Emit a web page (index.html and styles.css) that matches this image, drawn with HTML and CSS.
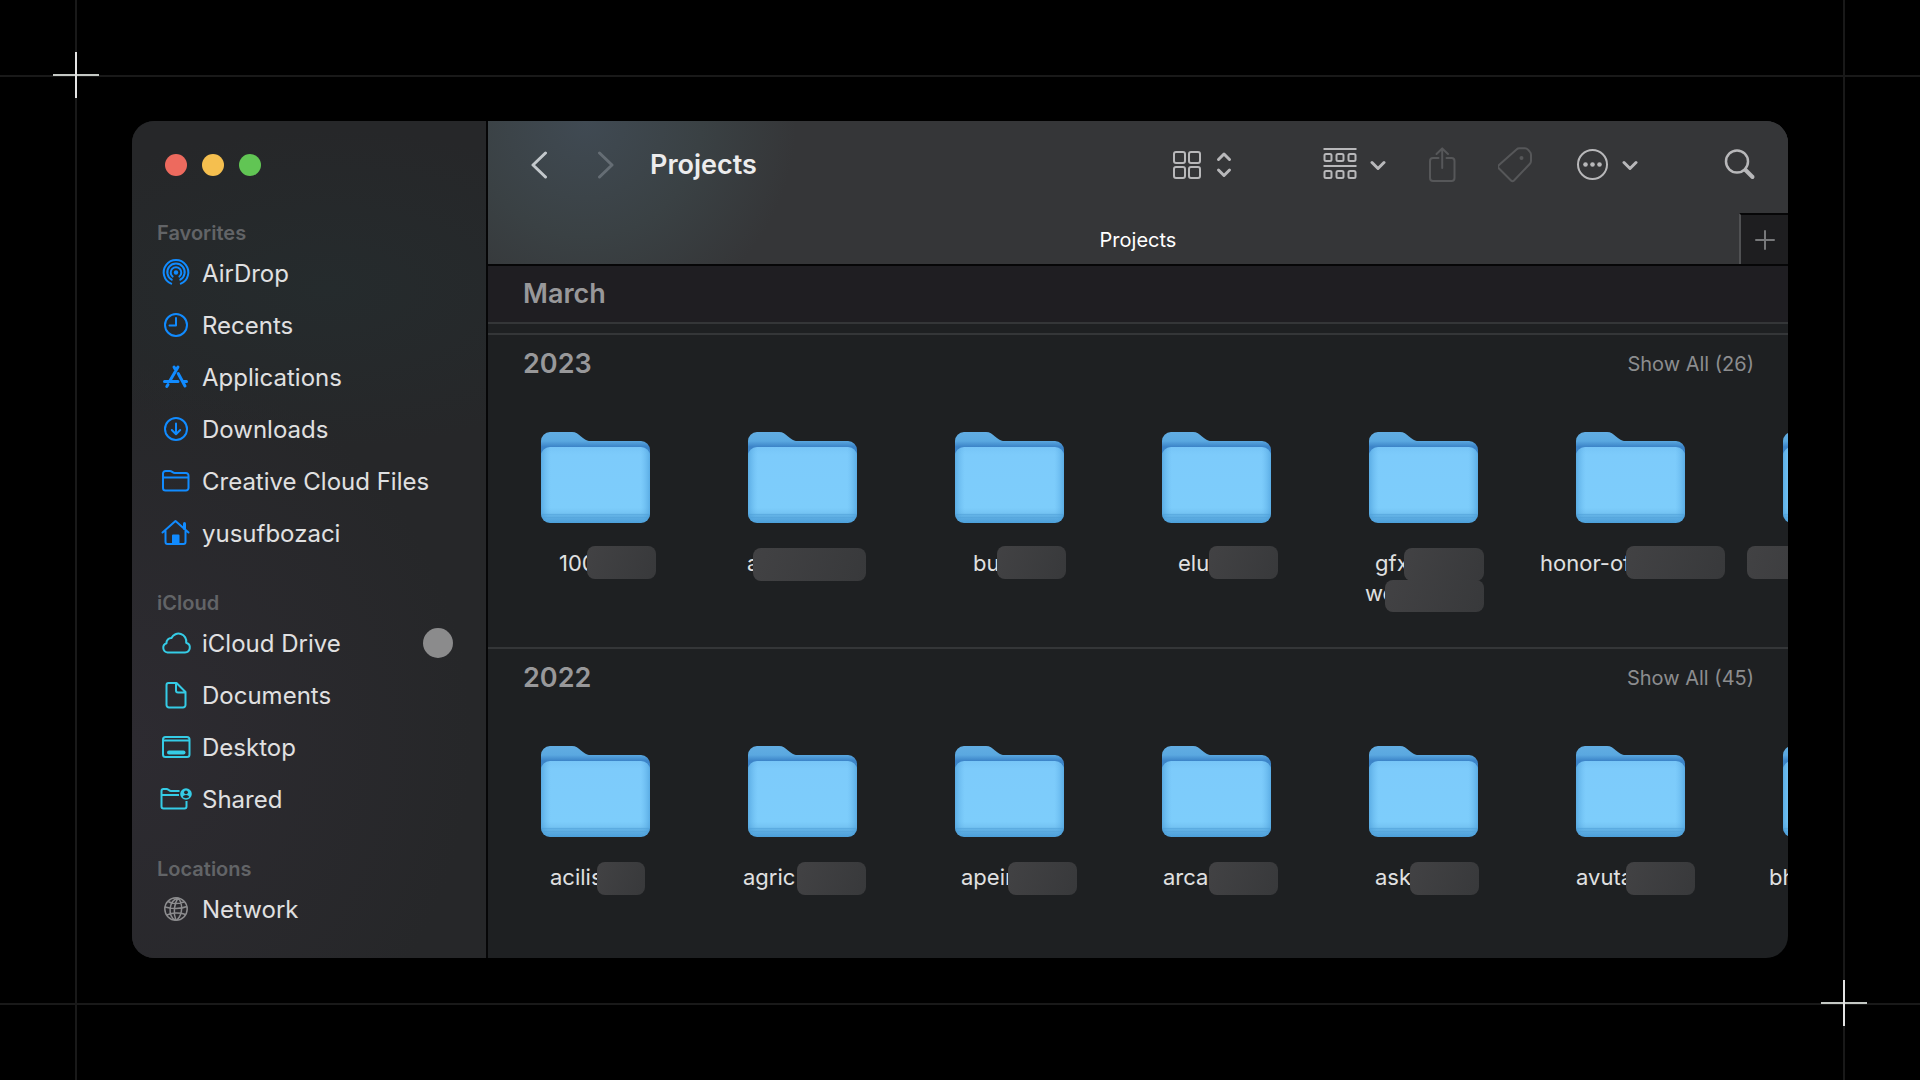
FILE: index.html
```html
<!DOCTYPE html>
<html lang="en">
<head>
<meta charset="utf-8">
<meta name="viewport" content="width=device-width, initial-scale=1">
<title>Projects</title>
<link rel="stylesheet" href="styles.css">
</head>
<body>
<svg class="defs" width="0" height="0" aria-hidden="true">
  <defs>
    <linearGradient id="back" x1="0" y1="0" x2="0" y2="1"><stop offset="0" stop-color="#62ade2"/><stop offset=".11" stop-color="#5aa8e0"/><stop offset=".18" stop-color="#3c84c8"/><stop offset="1" stop-color="#3f8fce"/></linearGradient>
    <linearGradient id="front" x1="0" y1="0" x2="0" y2="1"><stop offset="0" stop-color="#77c5f7"/><stop offset=".1" stop-color="#7dcbfb"/><stop offset=".8" stop-color="#7dcdfb"/><stop offset=".87" stop-color="#74c3f3"/><stop offset=".89" stop-color="#65b5e8"/><stop offset=".94" stop-color="#5aaae0"/><stop offset="1" stop-color="#4b9fda"/></linearGradient>
    <linearGradient id="edge" x1="0" y1="0" x2="1" y2="0"><stop offset="0" stop-color="#3f93d2" stop-opacity=".55"/><stop offset=".09" stop-color="#5fb0e8" stop-opacity="0"/><stop offset=".91" stop-color="#5fb0e8" stop-opacity="0"/><stop offset="1" stop-color="#3f93d2" stop-opacity=".55"/></linearGradient>
    <symbol id="folder" viewBox="0 0 109 91">
      <path fill="url(#back)" d="M0 9a9 9 0 0 1 9-9h22c4 0 6 2 9 4.500l3 2.200C45 8.300 47 9 50 9h50a9 9 0 0 1 9 9v64H0z"/>
      <rect y="15" width="109" height="76" rx="9" fill="url(#front)"/>
      <rect y="15" width="109" height="76" rx="9" fill="url(#edge)"/>
      <path d="M1 82.500h107M1 85.500h107" stroke="#4f9fd8" stroke-opacity=".45"/>
    </symbol>
    <symbol id="down" viewBox="0 0 16 36"><path d="M2 15.500l6 6 6-6" fill="none" stroke="currentColor" stroke-width="3" stroke-linecap="round" stroke-linejoin="round"/></symbol>
  </defs>
</svg>

<div class="guides" aria-hidden="true">
  <i class="guide guide-top"></i><i class="guide guide-bottom"></i><i class="guide guide-left"></i><i class="guide guide-right"></i>
  <i class="cross cross-start"></i><i class="cross cross-end"></i>
</div>

<div class="window">
  <aside class="sidebar">
    <div class="lights">
      <button class="light red" aria-label="Close"></button>
      <button class="light yellow" aria-label="Minimize"></button>
      <button class="light green" aria-label="Zoom"></button>
    </div>
    <nav class="places">
      <section class="group">
        <h2>Favorites</h2>
        <a class="place blue" href="#"><svg viewBox="0 0 32 32"><g fill="none" stroke="currentColor" stroke-width="2" stroke-linecap="round"><path d="M11.200 26.700a12.300 12.300 0 1 1 9.600 0"/><path d="M11.700 22.700a8.700 8.700 0 1 1 8.600 0"/><path d="M12.600 19.600a5.300 5.300 0 1 1 6.800 0"/></g><circle cx="16" cy="15.500" r="2.200" fill="currentColor"/></svg>AirDrop</a>
        <a class="place blue" href="#"><svg viewBox="0 0 32 32" fill="none" stroke="currentColor" stroke-width="2" stroke-linecap="round" stroke-linejoin="round"><circle cx="16" cy="16" r="11"/><path d="M16 9v7.500h-6.500"/></svg>Recents</a>
        <a class="place blue" href="#"><svg viewBox="0 0 32 32" fill="none" stroke="currentColor" stroke-width="3" stroke-linecap="round"><path d="M18 6l-8.500 14.500M14 6l2 3.500M18.200 12.500L25 25M4.500 20.500h13.500M23.500 20.500h3M8 23.500l-1.200 2"/></svg>Applications</a>
        <a class="place blue" href="#"><svg viewBox="0 0 32 32" fill="none" stroke="currentColor" stroke-width="2" stroke-linecap="round" stroke-linejoin="round"><circle cx="16" cy="16" r="11"/><path d="M16 10.500v10.500M11.800 17l4.200 4.200 4.200-4.200"/></svg>Downloads</a>
        <a class="place blue" href="#"><svg viewBox="0 0 32 32" fill="none" stroke="currentColor" stroke-width="2" stroke-linejoin="round"><path d="M3 23V8.500A2.500 2.500 0 0 1 5.500 6H10c2 0 2.500 2 5 2h11a2.500 2.500 0 0 1 2.500 2.500V23a2.500 2.500 0 0 1-2.500 2.500H5.500A2.500 2.500 0 0 1 3 23zM3 12.500h25.500"/></svg>Creative Cloud Files</a>
        <a class="place blue" href="#"><svg viewBox="0 0 32 32" fill="none" stroke="currentColor" stroke-width="2" stroke-linecap="round" stroke-linejoin="round"><path d="M2.500 15.500L15.500 4l13 11.500M5.500 14v11a2 2 0 0 0 2 2h16a2 2 0 0 0 2-2V14"/><path d="M24.500 6.500v5" stroke-width="3"/><path d="M13 18.500h5.500V27H13z" fill="currentColor"/></svg>yusufbozaci</a>
      </section>
      <section class="group">
        <h2>iCloud</h2>
        <a class="place cyan" href="#"><svg viewBox="0 0 32 32" fill="none" stroke="currentColor" stroke-width="2" stroke-linejoin="round"><path d="M7.500 25.500H25a5 5 0 0 0 1.200-9.800A7.800 7.800 0 0 0 11.500 11a4.800 4.800 0 0 0-5 5.200 4.800 4.800 0 0 0 1 9.300z"/></svg>iCloud Drive<span class="progress" role="img" aria-label="Syncing"></span></a>
        <a class="place cyan" href="#"><svg viewBox="0 0 32 32" fill="none" stroke="currentColor" stroke-width="2" stroke-linejoin="round"><path d="M8.500 4h8L25.500 13v13a2.500 2.500 0 0 1-2.500 2.500H9A2.500 2.500 0 0 1 6.500 26V6a2 2 0 0 1 2-2zM16 4v7.500a2 2 0 0 0 2 2h7.500"/></svg>Documents</a>
        <a class="place cyan" href="#"><svg viewBox="0 0 32 32" fill="none" stroke="currentColor" stroke-width="2"><rect x="3" y="6" width="26.500" height="20" rx="2.500"/><path d="M3 9.500h26.500"/><path d="M9 21.500h14.500" stroke-width="4" stroke-linecap="round"/></svg>Desktop</a>
        <a class="place cyan" href="#"><svg viewBox="0 0 32 32" fill="none" stroke="currentColor" stroke-width="2" stroke-linejoin="round"><path d="M19.500 8H11C9 8 8.500 6 6.500 6h-3A2 2 0 0 0 1.500 8v15.500a2 2 0 0 0 2 2h21a2 2 0 0 0 2-2v-5.500M1.500 12h17.500"/><circle cx="26" cy="11" r="5.800" fill="currentColor" stroke="none"/><g fill="#29282b" stroke="none"><circle cx="26" cy="9.300" r="1.900"/><path d="M22.800 14c.4-2.800 6-2.800 6.400 0-1.500 1.500-5 1.500-6.400 0z"/></g></svg>Shared</a>
      </section>
      <section class="group">
        <h2>Locations</h2>
        <a class="place grey" href="#"><svg viewBox="0 0 32 32" fill="none" stroke="currentColor" stroke-width="1.500"><circle cx="16" cy="16" r="11.200"/><path d="M18 5c-10 3-10 18-3 22M18 5c5 5 5 16-1 22M18 5c-4 6-5 15-2 22M5 14c6 2 16 2 22-.5M8 8.500c4 2.500 11 2.500 16 .5M7 22c5-2.500 13-2.500 18.500-.5"/></svg>Network</a>
      </section>
    </nav>
  </aside>

  <main class="content">
    <header class="chrome">
      <div class="toolbar">
        <button class="nav-btn" aria-label="Back"><svg viewBox="0 0 18 28"><path d="M15.500 2L3 14l12.500 12"/></svg></button>
        <button class="nav-btn dim" aria-label="Forward"><svg viewBox="0 0 18 28"><path d="M2.500 2L15 14 2.500 26"/></svg></button>
        <h1>Projects</h1>
        <button class="tool view" aria-label="View"><svg class="ico" viewBox="0 0 36 36" fill="none" stroke="currentColor" stroke-width="2"><rect x="6" y="5" width="11" height="11" rx="2"/><rect x="21" y="5" width="11" height="11" rx="2"/><rect x="6" y="20" width="11" height="11" rx="2"/><rect x="21" y="20" width="11" height="11" rx="2"/></svg><svg class="chev" viewBox="0 0 16 36"><path d="M2.500 12.500L8 7l5.500 5.500M2.500 23L8 28.500l5.500-5.500" fill="none" stroke="currentColor" stroke-width="3" stroke-linecap="round" stroke-linejoin="round"/></svg></button>
        <button class="tool" aria-label="Group"><svg class="ico" viewBox="0 0 36 36" fill="none" stroke="currentColor" stroke-width="2"><path d="M1.500 2h33M1.500 19h33"/><rect x="2.500" y="7" width="7" height="7" rx="1.500"/><rect x="14.500" y="7" width="7" height="7" rx="1.500"/><rect x="26.500" y="7" width="7" height="7" rx="1.500"/><rect x="2.500" y="24" width="7" height="7" rx="1.500"/><rect x="14.500" y="24" width="7" height="7" rx="1.500"/><rect x="26.500" y="24" width="7" height="7" rx="1.500"/></svg><svg class="chev"><use href="#down"/></svg></button>
        <div class="pair">
          <button class="tool dim" aria-label="Share"><svg class="ico" viewBox="0 0 36 36" fill="none" stroke="currentColor" stroke-width="2" stroke-linecap="round" stroke-linejoin="round"><path d="M12.500 11H7a3 3 0 0 0-3 3v17a3 3 0 0 0 3 3h18.500a3 3 0 0 0 3-3V14a3 3 0 0 0-3-3H20.500M16.200 21V1.500M10.500 7l5.700-5.500L22 7"/></svg></button>
          <button class="tool dim" aria-label="Tags"><svg class="ico" viewBox="0 0 36 36" fill="none" stroke="currentColor" stroke-width="2" stroke-linejoin="round"><path d="M18.500 2.500C19.500 1.500 20 1.300 21.500 1.300H27c1.500 0 2 .3 3 1.300l1.700 2C32.700 5.600 33 6.300 33 7.700V14c0 1.500-.3 2-1.300 3L16 33.500c-1 1-2 1-3 0L1 21.500c-1.200-1.200-1.200-2.400 0-3.500z"/><circle cx="23.500" cy="11" r="2" fill="currentColor" stroke="none"/></svg></button>
        </div>
        <button class="tool" aria-label="More"><svg class="ico" viewBox="0 0 36 36"><circle cx="18.500" cy="17.500" r="14.500" fill="none" stroke="currentColor" stroke-width="2"/><g fill="currentColor"><circle cx="11.500" cy="17.500" r="2.300"/><circle cx="18.500" cy="17.500" r="2.300"/><circle cx="25.500" cy="17.500" r="2.300"/></g></svg><svg class="chev"><use href="#down"/></svg></button>
        <button class="tool search" aria-label="Search"><svg class="ico" viewBox="0 0 36 36" fill="none" stroke="currentColor" stroke-linecap="round"><circle cx="15" cy="14.500" r="11" stroke-width="2.500"/><path d="M23.500 23l7 7" stroke-width="4"/></svg></button>
      </div>
      <div class="tabs">
        <button class="tab">Projects</button>
        <button class="new-tab" aria-label="New tab"><svg viewBox="0 0 20 20"><path d="M10 1v18M1 10h18" fill="none" stroke="currentColor" stroke-width="2" stroke-linecap="round"/></svg></button>
      </div>
    </header>

    <section class="month"><h2>March</h2></section>

    <section class="year">
      <header class="year-head"><h2>2023</h2><a href="#">Show All (26)</a></header>
      <ul class="folders">
        <li><svg class="folder"><use href="#folder"/></svg><span class="name" style="--indent:67px">100<i class="mask" style="--x:95px;--w:69px"></i></span></li>
        <li><svg class="folder"><use href="#folder"/></svg><span class="name" style="--indent:48px">a<i class="mask low" style="--x:54px;--w:113px"></i></span></li>
        <li><svg class="folder"><use href="#folder"/></svg><span class="name" style="--indent:67px">bu<i class="mask" style="--x:91px;--w:69px"></i></span></li>
        <li><svg class="folder"><use href="#folder"/></svg><span class="name" style="--indent:65px">elu<i class="mask" style="--x:96px;--w:69px"></i></span></li>
        <li><svg class="folder"><use href="#folder"/></svg><span class="name" style="--indent:55px">gfx<i class="mask low" style="--x:84px;--w:80px"></i></span><span class="name" style="--indent:45px">we<i class="mask wrapped" style="--x:65px;--w:99px"></i></span></li>
        <li><svg class="folder"><use href="#folder"/></svg><span class="name" style="--indent:13px">honor-of<i class="mask" style="--x:99px;--w:99px"></i></span></li>
        <li><svg class="folder"><use href="#folder"/></svg><span class="name"><i class="mask" style="--x:13px;--w:99px"></i></span></li>
      </ul>
    </section>

    <section class="year">
      <header class="year-head"><h2>2022</h2><a href="#">Show All (45)</a></header>
      <ul class="folders">
        <li><svg class="folder"><use href="#folder"/></svg><span class="name" style="--indent:58px">acilis<i class="mask low" style="--x:105px;--w:48px"></i></span></li>
        <li><svg class="folder"><use href="#folder"/></svg><span class="name" style="--indent:44px">agric<i class="mask low" style="--x:98px;--w:69px"></i></span></li>
        <li><svg class="folder"><use href="#folder"/></svg><span class="name" style="--indent:55px">apein<i class="mask low" style="--x:102px;--w:69px"></i></span></li>
        <li><svg class="folder"><use href="#folder"/></svg><span class="name" style="--indent:50px">arca<i class="mask low" style="--x:96px;--w:69px"></i></span></li>
        <li><svg class="folder"><use href="#folder"/></svg><span class="name" style="--indent:55px">ask<i class="mask low" style="--x:90px;--w:69px"></i></span></li>
        <li><svg class="folder"><use href="#folder"/></svg><span class="name" style="--indent:49px">avuta<i class="mask low" style="--x:99px;--w:69px"></i></span></li>
        <li><svg class="folder"><use href="#folder"/></svg><span class="name" style="--indent:35px">bh</span></li>
      </ul>
    </section>
  </main>
</div>
</body>
</html>
```
FILE: styles.css
```css
* { box-sizing: border-box; }

body {
  margin: 0;
  min-height: 100vh;
  padding: 121px 132px 122px;
  display: flex;
  position: relative;
  background: #000;
  color: #e0e0e1;
  font-family: Inter, "Liberation Sans", sans-serif;
  font-size: 22px;
}

h1, h2, ul { margin: 0; padding: 0; }
ul { list-style: none; }
a { color: inherit; text-decoration: none; }
button { margin: 0; padding: 0; border: 0; background: none; color: inherit; font: inherit; }
svg { display: block; flex: none; }
.defs { position: absolute; }

/* Guide lines and corner marks behind the window */
.guides { position: absolute; inset: 0; overflow: hidden; }
.guide { position: absolute; background: #191919; }
.guide-top, .guide-bottom { left: 0; right: 0; height: 2px; }
.guide-left, .guide-right { top: 0; bottom: 0; width: 2px; }
.guide-top { top: 75px; }
.guide-bottom { bottom: 75px; }
.guide-left { left: 75px; }
.guide-right { right: 75px; }
.cross {
  position: absolute;
  width: 46px;
  height: 46px;
  background:
    linear-gradient(#e4e4e4, #e4e4e4) center / 2px 100% no-repeat,
    linear-gradient(#c4c8c4, #c4c8c4) center / 100% 2px no-repeat;
}
.cross-start { left: 53px; top: 52px; }
.cross-end { right: 53px; bottom: 54px; }

.window {
  position: relative;
  flex: 1;
  min-width: 0;
  display: flex;
  overflow: hidden;
  border-radius: 22px;
  background: #1e2022;
}

/* Sidebar */
.sidebar {
  flex: none;
  width: 356px;
  border-right: 2px solid #060607;
  padding: 33px 25px 20px;
  background:
    radial-gradient(ellipse 320px 160px at 55% 20%, #252b2d, transparent),
    radial-gradient(ellipse 340px 380px at 0 74%, #2d2b31, transparent),
    #262729;
}
.lights { display: flex; gap: 15px; padding-left: 8px; }
.light { width: 22px; height: 22px; border-radius: 50%; }
.red { background: #ed6a5e; }
.yellow { background: #f5bf4f; }
.green { background: #61c554; }
.places { display: flex; flex-direction: column; gap: 27px; padding-top: 40px; }
.group h2 { height: 31px; font-size: 20px; line-height: 34px; font-weight: 600; color: #626467; }
.place { display: flex; align-items: center; height: 52px; padding-left: 3px; gap: 10px; font-size: 24px; }
.place svg { width: 32px; height: 32px; }
.blue svg { color: #118bff; }
.cyan svg { color: #35cce6; }
.grey svg { color: #8c8c8e; }
.progress { width: 30px; height: 30px; margin-left: auto; margin-right: 8px; border-radius: 50%; background: #8b8b8c; }

/* Toolbar and tabs */
.content { flex: 1; min-width: 0; overflow: hidden; }
.chrome {
  border-bottom: 2px solid #060607;
  background: radial-gradient(circle 210px at 98px 0, #404a53, #3a4144 55%, #353638) #353638;
}
.toolbar { height: 92px; display: flex; align-items: center; padding: 0 30px 4px 42px; gap: 40px; color: #b8b8ba; }
.nav-btn svg { width: 18px; height: 28px; fill: none; stroke: #c3c8cc; stroke-width: 3; stroke-linecap: round; stroke-linejoin: round; }
.nav-btn + .nav-btn { margin-left: 9px; }
.nav-btn.dim svg { stroke: #656d74; }
h1 { flex: 1; font-size: 27px; line-height: 32px; font-weight: 600; color: #ececed; margin-left: -5px; }
.tool { display: flex; align-items: center; gap: 12px; }
.ico { width: 36px; height: 36px; }
.chev { width: 16px; height: 36px; }
.view { margin-right: 50px; }
.search { margin-left: 44px; }
.tool.dim { color: #565759; }
.pair { display: flex; gap: 36px; }
.tabs { display: flex; height: 51px; }
.tab { flex: 1; padding: 2px 0 0 49px; font-size: 20px; color: #fff; }
.new-tab {
  width: 49px;
  display: grid;
  place-items: center;
  border-top: 2px solid #060607;
  border-left: 2px solid #505153;
  background: #1e1e20;
  color: #77787a;
}
.new-tab svg { width: 20px; height: 20px; }

/* Folder groups */
.month { height: 58px; padding: 12px 35px; background: #1f1e22; border-bottom: 2px solid #343638; margin-bottom: 9px; }
.month h2, .year h2 { font-size: 27px; line-height: 32px; font-weight: 600; color: #98989a; }
.year { border-top: 2px solid #343638; padding-bottom: 39px; }
.year-head { display: flex; align-items: center; justify-content: space-between; padding: 11px 34px 11px 35px; }
.year-head a { font-size: 20px; line-height: 32px; padding-top: 2px; color: #8c8d8f; }
.year-head h2 { padding-top: 2px; }
.folders { display: grid; grid-auto-flow: column; grid-auto-columns: 207px; padding: 41px 0 0 4px; }
.year:last-child { padding-bottom: 0; }
.folder { width: 109px; height: 91px; margin: 0 auto 25px; }
.name { position: relative; display: block; height: 30px; line-height: 30px; padding-left: var(--indent); }
.mask {
  position: absolute;
  left: var(--x);
  top: -2px;
  width: var(--w);
  height: 33px;
  border-radius: 8px;
  background: linear-gradient(110deg, #424244, #38393b);
}
.mask.low { top: 0; }
.mask.wrapped { top: 2px; height: 32px; }
```
